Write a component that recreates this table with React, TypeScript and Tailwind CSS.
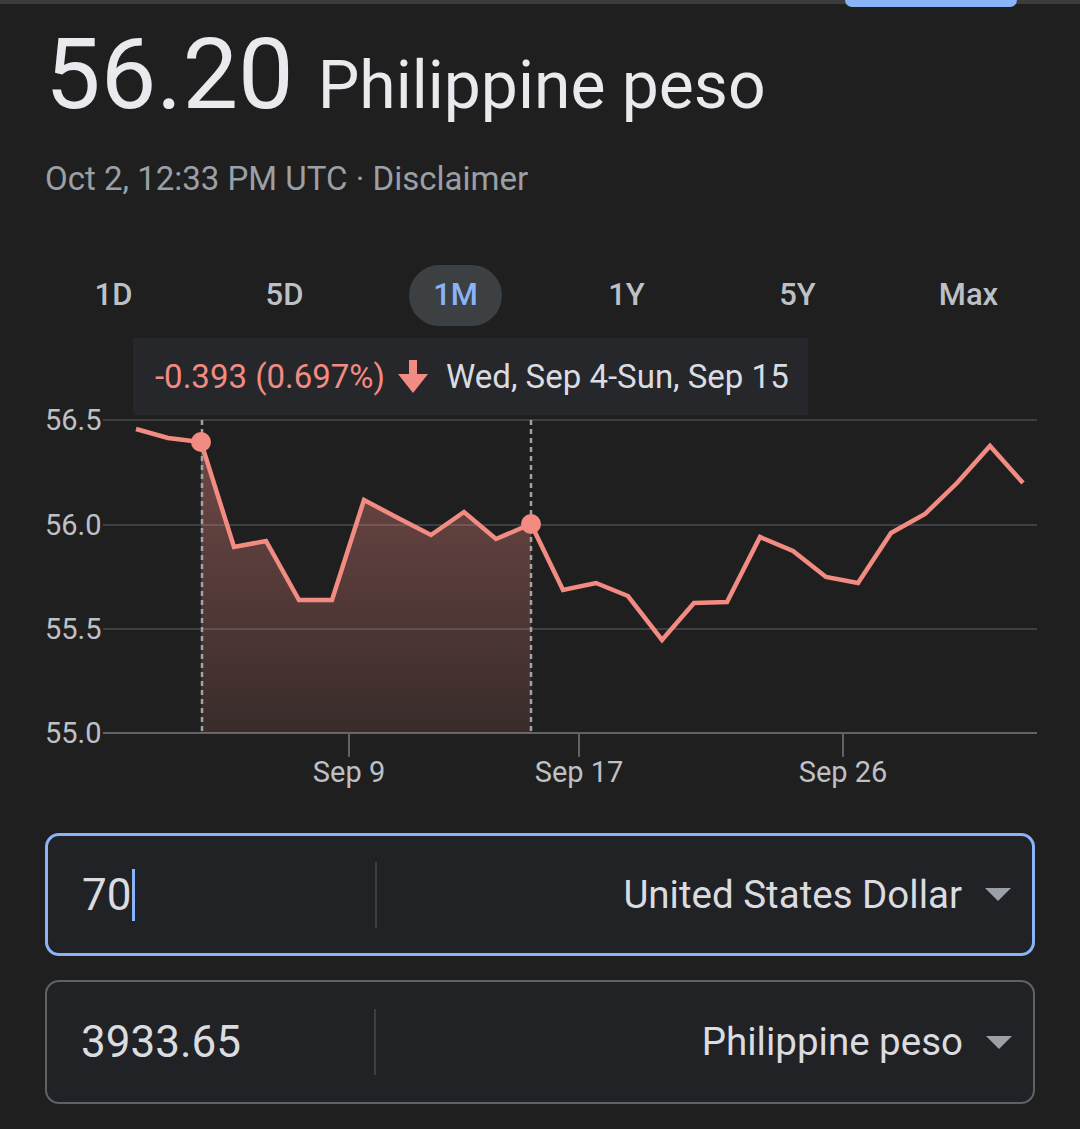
import React from 'react'

const tabs = ['1D', '5D', '1M', '1Y', '5Y', 'Max']

// chart points in page pixels
const points: [number, number][] = [
  [136, 429], [168, 438], [201, 442], [234, 547], [266, 541], [299, 600], [332, 600],
  [364, 500], [398, 518], [431, 535], [464, 512], [496, 539], [531, 524], [563, 590],
  [596, 583], [628, 596], [662, 640], [694, 603], [727, 602], [760, 537], [793, 551],
  [826, 577], [858, 583], [891, 533], [925, 514], [957, 483], [990, 446], [1023, 483],
]

const gridY = [
  { y: 420, label: '56.5' },
  { y: 525, label: '56.0' },
  { y: 629, label: '55.5' },
  { y: 733, label: '55.0' },
]

const ticks = [
  { x: 349, label: 'Sep 9' },
  { x: 579, label: 'Sep 17' },
  { x: 843, label: 'Sep 26' },
]

function Chart() {
  const line = points.map(([x, y]) => `${x},${y}`).join(' ')
  const sel = points.slice(2, 13)
  const area = [...sel.map(([x, y]) => `${x},${y}`), '531,733', '201,733'].join(' ')

  return (
    <svg width="1080" height="470" viewBox="0 0 1080 470" className="block">
      <defs>
        <linearGradient id="fill" x1="0" y1="442" x2="0" y2="733" gradientUnits="userSpaceOnUse">
          <stop offset="0" stopColor="#f28b82" stopOpacity="0.38" />
          <stop offset="1" stopColor="#f28b82" stopOpacity="0.12" />
        </linearGradient>
      </defs>
      <g transform="translate(0 -330)">
        {gridY.map((g, i) => (
          <g key={g.label}>
            <line
              x1="103"
              x2="1037"
              y1={g.y}
              y2={g.y}
              stroke={i === 3 ? '#5f6368' : '#3c4043'}
              strokeWidth="2"
            />
            <text
              x="45"
              y={g.y + 10}
              fill="#bdc1c6"
              fontSize="29"
              fontFamily="Roboto, sans-serif"
            >
              {g.label}
            </text>
          </g>
        ))}
        {ticks.map((t) => (
          <g key={t.label}>
            <line x1={t.x} x2={t.x} y1="733" y2="757" stroke="#5f6368" strokeWidth="2" />
            <text
              x={t.x}
              y="782"
              textAnchor="middle"
              fill="#bdc1c6"
              fontSize="29"
              fontFamily="Roboto, sans-serif"
            >
              {t.label}
            </text>
          </g>
        ))}
        <polygon points={area} fill="url(#fill)" />
        <line x1="202" x2="202" y1="420" y2="733" stroke="#a0a4a8" strokeWidth="2.5" strokeDasharray="5 4" />
        <line x1="531" x2="531" y1="420" y2="733" stroke="#a0a4a8" strokeWidth="2.5" strokeDasharray="5 4" />
        <polyline points={line} fill="none" stroke="#f28b82" strokeWidth="4.5" strokeLinejoin="miter" />
        <circle cx="201" cy="442" r="10" fill="#f28b82" />
        <circle cx="531" cy="524" r="10" fill="#f28b82" />
      </g>
    </svg>
  )
}

function Caret() {
  return (
    <svg width="26" height="13" viewBox="0 0 26 13">
      <polygon points="0,0 26,0 13,13" fill="#9aa0a6" />
    </svg>
  )
}

function ConverterRow({
  amount,
  currency,
  active,
}: {
  amount: string
  currency: string
  active?: boolean
}) {
  return (
    <div
      className={`flex items-center rounded-[14px] bg-[#212226] ${
        active ? 'h-[123px] border-[3px] border-[#8ab4f8]' : 'h-[124px] border-2 border-[#5f6368]'
      }`}
    >
      <div className="w-[327px] pl-[34px] flex items-center text-[44px] text-[#dadce0]">
        {amount}
        {active && <span className="inline-block w-[3px] h-[52px] bg-[#8ab4f8] ml-[1px]" />}
      </div>
      <div className="w-[2px] h-[66px] bg-[#3c4043]" />
      <div className="flex-1 flex items-center justify-end gap-[23px] pr-[21px] text-[38.5px] text-[#dadce0]">
        <span>{currency}</span>
        <Caret />
      </div>
    </div>
  )
}

export default function App() {
  return (
    <div className="w-[1080px] h-[1129px] overflow-hidden bg-[#1f1f1f] font-['Roboto',sans-serif]">
      {/* top strip with partial pill */}
      <div className="relative h-[4px] bg-[#3c3c3c]">
        <div className="absolute left-[845px] top-0 w-[172px] h-[7px] rounded-b-full bg-[#8ab4f8]" />
      </div>

      <div className="pl-[45px] pt-[21px] flex items-baseline text-[#e8eaed]">
        <span className="text-[99px] leading-none">56.20</span>
        <span className="ml-[24px] text-[66px] leading-none">Philippine peso</span>
      </div>

      <div className="pl-[45px] mt-[38px] text-[33px] leading-none text-[#9aa0a6]">
        Oct 2, 12:33 PM UTC · Disclaimer
      </div>

      <div className="mt-[70px] ml-[28px] w-[1026px] grid grid-cols-6 h-[61px]">
        {tabs.map((t) => (
          <div key={t} className="flex items-center justify-center">
            {t === '1M' ? (
              <div className="w-[93px] h-[61px] rounded-full bg-[#3c4043] flex items-center justify-center text-[31px] font-medium text-[#8ab4f8]">
                {t}
              </div>
            ) : (
              <span className="text-[31px] font-medium text-[#bdc1c6]">{t}</span>
            )}
          </div>
        ))}
      </div>

      <div className="relative mt-[4px] h-[470px]">
        <Chart />
        <div className="absolute left-[133px] top-[8px] w-[675px] h-[77px] bg-[#25272b] flex items-center pl-[22px] text-[33px]">
          <span className="text-[#f28b82]">-0.393 (0.697%)</span>
          <svg width="32" height="34" viewBox="0 0 32 34" className="ml-[12px]">
            <polygon points="12,0 20,0 20,14 31,14 16,33 1,14 12,14" fill="#f28b82" />
          </svg>
          <span className="ml-[17px] text-[#dadce0]">Wed, Sep 4-Sun, Sep 15</span>
        </div>
      </div>

      <div className="mt-[33px] mx-[45px] flex flex-col gap-[24px]">
        <ConverterRow amount="70" currency="United States Dollar" active />
        <ConverterRow amount="3933.65" currency="Philippine peso" />
      </div>
    </div>
  )
}
